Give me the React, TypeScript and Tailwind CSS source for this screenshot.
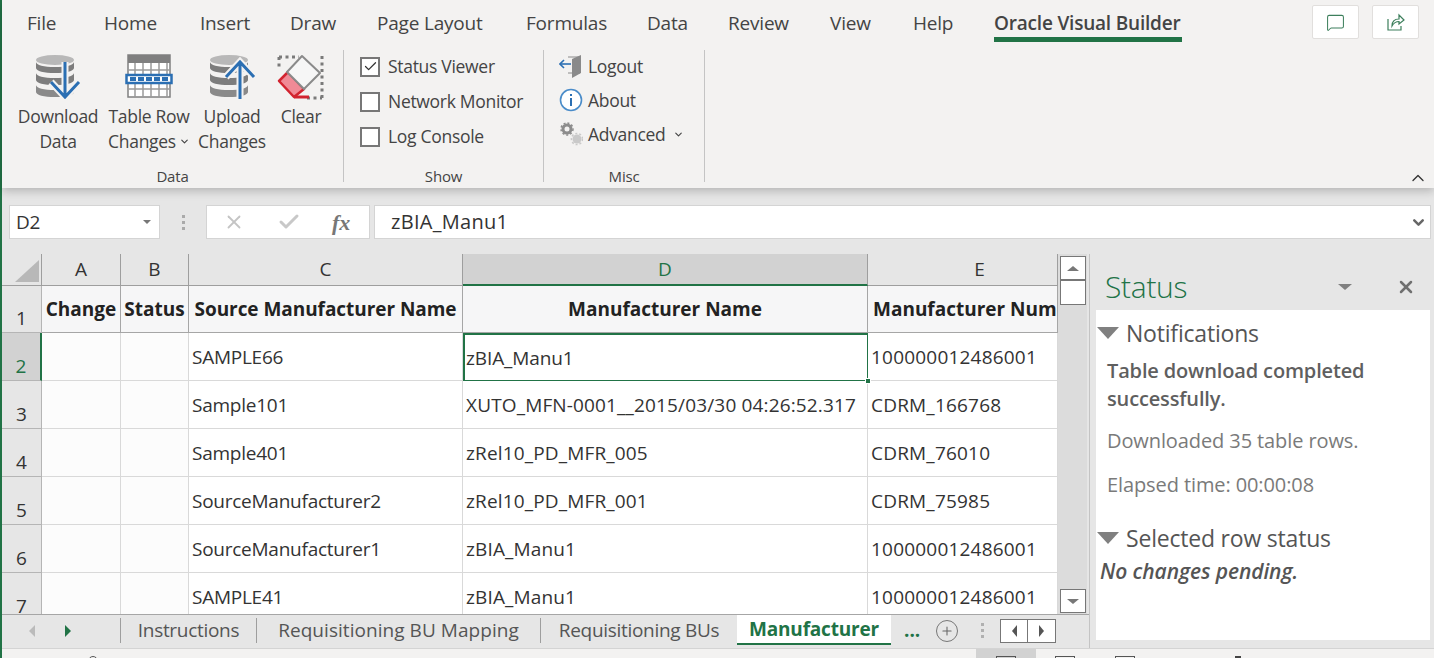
import { Check, ChevronDown, ChevronUp, MessageSquare, Plus, X } from "lucide-react";

const font = "font-['Open_Sans','Noto_Sans',sans-serif]";

const tabs = [
  { label: "File", cls: "w-[77px]" },
  { label: "Home", cls: "w-[96px]" },
  { label: "Insert", cls: "w-[90px]" },
  { label: "Draw", cls: "w-[87px]" },
  { label: "Page Layout", cls: "w-[149px]" },
  { label: "Formulas", cls: "w-[121px]" },
  { label: "Data", cls: "w-[81px]" },
  { label: "Review", cls: "w-[102px]" },
  { label: "View", cls: "w-[83px]" },
  { label: "Help", cls: "w-[81px]" },
];

const rows = [
  { n: "2", c: "SAMPLE66", d: "zBIA_Manu1", e: "100000012486001" },
  { n: "3", c: "Sample101", d: "XUTO_MFN-0001__2015/03/30 04:26:52.317", e: "CDRM_166768" },
  { n: "4", c: "Sample401", d: "zRel10_PD_MFR_005", e: "CDRM_76010" },
  { n: "5", c: "SourceManufacturer2", d: "zRel10_PD_MFR_001", e: "CDRM_75985" },
  { n: "6", c: "SourceManufacturer1", d: "zBIA_Manu1", e: "100000012486001" },
  { n: "7", c: "SAMPLE41", d: "zBIA_Manu1", e: "100000012486001" },
];

function DbIcon({ up }: { up?: boolean }) {
  const arrow = up ? "M32 46V9M18 24 32 9l14 15" : "M31 9v35M17 29l14 15 14-15";
  return (
    <svg width="48" height="48" viewBox="0 0 48 48">
      <ellipse cx="21" cy="7" rx="19" ry="5" fill="#b8b8b8" />
      <path d="M2 9v6c0 3 8 5 19 5s19-2 19-5V9c0 3-8 5-19 5S2 12 2 9z" fill="#7d7d7d" />
      <path d="M2 20v7c0 3 8 5 19 5s19-2 19-5v-7c0 3-8 5-19 5S2 23 2 20z" fill="#7d7d7d" />
      <path d="M2 32v7c0 3 8 5 19 5s19-2 19-5v-7c0 3-8 5-19 5S2 35 2 32z" fill="#8a8a8a" />
      <path d={arrow} fill="none" stroke="#f3f2f1" strokeWidth="7" />
      <path d={arrow} fill="none" stroke="#2b6fb3" strokeWidth="3" />
    </svg>
  );
}

function TableIcon() {
  const lines = [7, 15, 23, 31, 39];
  return (
    <svg width="48" height="48" viewBox="0 0 48 48">
      <rect x="3" y="2" width="42" height="42" fill="#fff" stroke="#808080" strokeWidth="1.5" />
      <rect x="3" y="2" width="42" height="8" fill="#7f7f7f" />
      {lines.map((x) => (
        <path key={x} d={`M${x + 3} 10V44`} stroke="#9a9a9a" strokeWidth="1.5" />
      ))}
      <path d="M3 17h42M3 36h42" stroke="#9a9a9a" strokeWidth="1.5" />
      <rect x="1.500" y="22" width="45" height="8" fill="#fff" stroke="#2b6fb3" strokeWidth="2.5" />
      {lines.map((x) => (
        <rect key={x} x={x - 2} y="24" width="6" height="4" fill="#2b6fb3" />
      ))}
    </svg>
  );
}

function EraserIcon() {
  return (
    <svg width="48" height="48" viewBox="0 0 48 48">
      <path d="M2 4h20M45 3v42M30 45h15M2 4v10" fill="none" stroke="#7a7a7a" strokeWidth="3" strokeDasharray="3 3.5" />
      <path d="M11 19 2 28l15 16 10-8z" fill="#f08a96" stroke="#d2232f" strokeWidth="2.5" strokeLinejoin="round" />
      <path d="M17 44h15" stroke="#d2232f" strokeWidth="3" />
      <path d="M25 3 43 20 27 36 10 19z" fill="#f6f6f6" stroke="#8a8a8a" strokeWidth="2" strokeLinejoin="round" />
    </svg>
  );
}

function LogoutIcon() {
  return (
    <svg width="24" height="24" viewBox="0 0 24 24">
      <path d="M9 3h12v16H9" fill="none" stroke="#8a8a8a" strokeWidth="1" />
      <path d="M13 5 22 1v18l-9 5z" fill="#8a8a8a" />
      <path d="M1 10h11" stroke="#2b6fb3" strokeWidth="1.6" />
      <path d="M5 6 1 10l4 4" fill="none" stroke="#2b6fb3" strokeWidth="1.6" />
    </svg>
  );
}

function InfoIcon() {
  return (
    <svg width="24" height="24" viewBox="0 0 24 24">
      <circle cx="12" cy="12" r="10.5" fill="#fff" stroke="#4a8cc9" strokeWidth="1.6" />
      <rect x="11" y="10" width="2" height="8" fill="#2b6fb3" />
      <rect x="11" y="6" width="2" height="2" fill="#2b6fb3" />
    </svg>
  );
}

function GearsIcon() {
  return (
    <svg width="24" height="24" viewBox="0 0 24 24">
      <circle cx="8" cy="7" r="4" fill="none" stroke="#8c8c8c" strokeWidth="3" />
      <circle cx="8" cy="7" r="6" fill="none" stroke="#8c8c8c" strokeWidth="1.5" strokeDasharray="2 2" />
      <circle cx="18" cy="17" r="4.500" fill="#c9c9c9" />
      <circle cx="18" cy="17" r="5.600" fill="none" stroke="#c9c9c9" strokeWidth="1.5" strokeDasharray="2 2" />
    </svg>
  );
}

function ShareIcon() {
  return (
    <svg width="20" height="20" viewBox="0 0 20 20" fill="none" stroke="#3d7f5c" strokeWidth="1.2">
      <path d="M2 7v11h13v-4" />
      <path d="M6 14c0-5 3-7 7-7V3l5 5-5 4V9.500c-3 0-5 1-7 4.500z" />
    </svg>
  );
}

function BigButton({ icon, lines, cls, caret }: { icon: React.ReactNode; lines: string[]; cls: string; caret?: boolean }) {
  return (
    <div className={`flex flex-col items-center ${cls}`}>
      <div className="h-[50px]">{icon}</div>
      <div className="mt-[1px] text-center text-[17.5px] leading-[25px] text-[#444] whitespace-nowrap tracking-[-0.3px]">
        {lines.map((l, i) => (
          <div key={l} className="flex items-center justify-center gap-[3px]">
            {l}
            {caret && i === lines.length - 1 && <ChevronDown size={11} strokeWidth={2.5} />}
          </div>
        ))}
      </div>
    </div>
  );
}

function CheckRow({ label, checked }: { label: string; checked?: boolean }) {
  return (
    <div className="flex h-[35px] items-center">
      <div className="flex h-[20px] w-[20px] items-center justify-center border-2 border-[#777] bg-white">
        {checked && <Check size={15} strokeWidth={2} color="#333" />}
      </div>
      <span className="ml-[8px] text-[17.5px] tracking-[-0.3px] text-[#444] whitespace-nowrap">{label}</span>
    </div>
  );
}

function MiscRow({ icon, label, caret }: { icon: React.ReactNode; label: string; caret?: boolean }) {
  return (
    <div className="flex h-[34px] items-center">
      <div className="h-[24px] w-[24px]">{icon}</div>
      <span className="ml-[5px] text-[17.5px] tracking-[-0.3px] text-[#444]">{label}</span>
      {caret && <ChevronDown size={11} strokeWidth={2.5} className="ml-[7px] text-[#444]" />}
    </div>
  );
}

function GroupLabel({ text }: { text: string }) {
  return <div className="text-center text-[15px] leading-[13px] tracking-[-0.2px] text-[#444]">{text}</div>;
}

function Ribbon() {
  return (
    <div className="relative z-10 h-[188px] bg-[#f3f2f1] shadow-[0_3px_9px_rgba(0,0,0,0.22)]">
      <div className="flex h-[50px]">
        <div className="flex pl-[25px] pt-[9px] text-[19px] leading-[28px] tracking-[-0.2px] text-[#444]">
          {tabs.map((t) => (
            <div key={t.label} className={t.cls}>
              {t.label}
            </div>
          ))}
          <div className="h-[33px] w-[188px] border-b-[5px] border-[#217346] font-semibold whitespace-nowrap text-[#444]">
            Oracle Visual Builder
          </div>
        </div>
        <div className="ml-[130px] mt-[5px] flex h-[34px] gap-[13px]">
          <div className="flex h-[34px] w-[47px] items-center justify-center rounded-[2px] border border-[#e1dfdd] bg-white">
            <MessageSquare size={19} strokeWidth={1.3} color="#3d7f5c" />
          </div>
          <div className="flex h-[34px] w-[47px] items-center justify-center rounded-[2px] border border-[#e1dfdd] bg-white">
            <ShareIcon />
          </div>
        </div>
      </div>
      <div className="flex h-[132px]">
        <div className="flex w-[342px] flex-col border-r border-[#c4c4c4] pl-[12px]">
          <div className="flex h-[120px] shrink-0 pt-[3px]">
            <BigButton icon={<DbIcon />} lines={["Download", "Data"]} cls="w-[88px]" />
            <BigButton icon={<TableIcon />} lines={["Table Row", "Changes"]} cls="w-[94px]" caret />
            <BigButton icon={<DbIcon up />} lines={["Upload", "Changes"]} cls="w-[72px]" />
            <BigButton icon={<EraserIcon />} lines={["Clear"]} cls="w-[66px]" />
          </div>
          <div className="-ml-[12px]">
            <GroupLabel text="Data" />
          </div>
        </div>
        <div className="flex w-[200px] flex-col border-r border-[#c4c4c4]">
          <div className="-mt-[1px] h-[121px] shrink-0 pl-[16px]">
            <CheckRow label="Status Viewer" checked />
            <CheckRow label="Network Monitor" />
            <CheckRow label="Log Console" />
          </div>
          <GroupLabel text="Show" />
        </div>
        <div className="flex w-[161px] flex-col border-r border-[#c4c4c4]">
          <div className="-mt-[1px] h-[121px] shrink-0 pl-[15px]">
            <MiscRow icon={<LogoutIcon />} label="Logout" />
            <MiscRow icon={<InfoIcon />} label="About" />
            <MiscRow icon={<GearsIcon />} label="Advanced" caret />
          </div>
          <GroupLabel text="Misc" />
        </div>
      </div>
      <ChevronUp size={20} strokeWidth={1.6} className="absolute right-[6px] bottom-0 text-[#333]" />
    </div>
  );
}

function FormulaBar() {
  return (
    <div className="flex h-[66px] items-start bg-[#e6e6e6] pl-[7px] pr-[3px] pt-[17px]">
      <div className="flex h-[34px] w-[151px] items-center justify-between border border-[#d4d4d4] bg-white pl-[6px] pr-[8px]">
        <span className="text-[19px] tracking-[-0.2px] text-[#333]">D2</span>
        <span className="h-0 w-0 border-x-[4px] border-t-[4px] border-x-transparent border-t-[#777]" />
      </div>
      <div className="flex h-[34px] w-[46px] flex-col items-center justify-center gap-[3px]">
        <span className="h-[3px] w-[3px] bg-[#aaa]" />
        <span className="h-[3px] w-[3px] bg-[#aaa]" />
        <span className="h-[3px] w-[3px] bg-[#aaa]" />
      </div>
      <div className="flex h-[34px] w-[164px] items-center border border-[#d4d4d4] bg-white pl-[16px]">
        <X size={22} strokeWidth={2} color="#c4c4c4" />
        <Check size={24} strokeWidth={3} color="#c8c8c8" className="ml-[32px]" />
        <span className="ml-[31px] font-['Liberation_Serif',serif] text-[22px] italic font-bold text-[#777]">fx</span>
      </div>
      <div className="ml-[4px] flex h-[34px] flex-1 items-center justify-between border border-[#d4d4d4] bg-white pl-[16px] pr-[3px]">
        <span className="text-[20px] tracking-[0.3px] text-[#333]">zBIA_Manu1</span>
        <ChevronDown size={17} strokeWidth={3.5} color="#666" />
      </div>
    </div>
  );
}

function Sheet() {
  const head = "flex items-center justify-center h-[32px] border-r border-b text-[19px]";
  const title = "flex h-[47px] items-center justify-center border-r border-b border-[#a6a6a6] bg-[#f6f6f7] pt-[1px] text-[19px] font-bold text-[#222] whitespace-nowrap overflow-hidden";
  const cell = "flex h-[48px] items-center border-r border-b pt-[2px] text-[19px] text-[#333] whitespace-nowrap overflow-hidden";
  const rowHead = "flex items-end justify-center border-r border-b text-[19px]";
  const plainHead = "border-[#9e9e9e] bg-[#e6e6e6] text-[#333]";
  return (
    <div className="h-[360px] overflow-hidden bg-white">
      <div className="grid w-[1056px] grid-cols-[40px_79px_68px_274px_405px_190px]">
        <div className={`${head} ${plainHead} relative`}>
          <svg width="24" height="22" viewBox="0 0 24 22" className="absolute right-[2px] bottom-[3px]">
            <path d="M24 0v22H0z" fill="#b8b8b8" />
          </svg>
        </div>
        <div className={`${head} ${plainHead}`}>A</div>
        <div className={`${head} ${plainHead}`}>B</div>
        <div className={`${head} ${plainHead}`}>C</div>
        <div className={`${head} border-r-[#9e9e9e] border-b-2 border-b-[#217346] bg-[#d2d2d2] text-[#217346]`}>D</div>
        <div className={`${head} ${plainHead} pl-[34px]`}>E</div>

        <div className={`${rowHead} h-[47px] border-[#b5b5b5] bg-[#e6e6e6] text-[#333]`}>1</div>
        <div className={title}>Change</div>
        <div className={title}>Status</div>
        <div className={`${title} tracking-[-0.05px]`}>Source Manufacturer Name</div>
        <div className={title}>Manufacturer Name</div>
        <div className={`${title} justify-start pl-[5px]`}>Manufacturer Number</div>

        {rows.map((r, i) => (
          <div key={r.n} className="contents">
            <div
              className={
                i === 0
                  ? `${rowHead} h-[48px] border-r-2 border-r-[#217346] border-b-[#b5b5b5] bg-[#d2d2d2] text-[#217346]`
                  : `${rowHead} h-[48px] border-[#b5b5b5] bg-[#e6e6e6] text-[#333]`
              }
            >
              {r.n}
            </div>
            <div className={`${cell} border-[#d9d9d9] bg-[#fcfcfc]`} />
            <div className={`${cell} border-[#d9d9d9] bg-[#fcfcfc]`} />
            <div className={`${cell} border-[#d9d9d9] pl-[3px] tracking-[-0.25px]`}>{r.c}</div>
            {i === 0 ? (
              <div className={`${cell} relative overflow-visible border-2 border-[#217346] pl-[1px] pt-0 tracking-[-0.1px]`}>
                {r.d}
                <span className="absolute -right-[4px] -bottom-[4px] h-[6px] w-[6px] border border-white bg-[#217346]" />
              </div>
            ) : (
              <div className={`${cell} border-[#d9d9d9] pl-[3px] tracking-[0.15px]`}>{r.d}</div>
            )}
            <div className={`${cell} border-[#d9d9d9] pl-[3px] tracking-[0.2px]`}>{r.e}</div>
          </div>
        ))}
      </div>
    </div>
  );
}

function Scrollbar() {
  return (
    <div className="flex h-[360px] w-[29px] flex-col items-center bg-[#dcdcdc] pt-[2px]">
      <div className="flex h-[24px] w-[26px] items-center justify-center border border-[#777] bg-white">
        <span className="h-0 w-0 border-x-[6px] border-b-[5px] border-x-transparent border-b-[#777]" />
      </div>
      <div className="h-[25px] w-[26px] border border-[#777] bg-white" />
      <div className="flex-1" />
      <div className="mb-[1px] flex h-[24px] w-[26px] items-center justify-center border border-[#777] bg-white">
        <span className="h-0 w-0 border-x-[6px] border-t-[5px] border-x-transparent border-t-[#777]" />
      </div>
    </div>
  );
}

function SheetTabs() {
  return (
    <div className="flex h-[34px] items-stretch border-t border-[#a6a6a6] bg-[#e6e6e6] pb-[2px] text-[19px] text-[#555]">
      <div className="flex w-[118px] items-center pl-[27px]">
        <span className="h-0 w-0 border-y-[6px] border-r-[6px] border-y-transparent border-r-[#bbb]" />
        <span className="ml-[30px] h-0 w-0 border-y-[6px] border-l-[6px] border-y-transparent border-l-[#217346]" />
      </div>
      <div className="my-[3px] flex w-[136px] items-center justify-center border-l border-[#9e9e9e] tracking-[-0.3px]">Instructions</div>
      <div className="my-[3px] flex w-[284px] items-center justify-center border-l border-[#9e9e9e] tracking-[0.05px] whitespace-nowrap">Requisitioning BU Mapping</div>
      <div className="my-[3px] flex w-[197px] items-center justify-center border-l border-[#9e9e9e] tracking-[-0.3px] whitespace-nowrap">Requisitioning BUs</div>
      <div className="mb-[1px] flex w-[154px] items-center justify-center border-b-[2px] border-[#217346] bg-white font-bold tracking-[-0.2px] text-[#217346]">Manufacturer</div>
      <div className="ml-[13px] flex items-center font-bold text-[#217346]">...</div>
      <div className="ml-[16px] flex items-center">
        <div className="flex h-[22px] w-[22px] items-center justify-center rounded-full border border-[#777]">
          <Plus size={14} strokeWidth={1.8} color="#666" />
        </div>
      </div>
      <div className="ml-[23px] flex flex-col items-center justify-center gap-[3px]">
        <span className="h-[3px] w-[3px] bg-[#b0b0b0]" />
        <span className="h-[3px] w-[3px] bg-[#b0b0b0]" />
        <span className="h-[3px] w-[3px] bg-[#b0b0b0]" />
      </div>
      <div className="ml-[16px] flex items-center">
        <div className="flex h-[24px] w-[28px] items-center justify-center border border-[#777] bg-white">
          <span className="h-0 w-0 border-y-[6px] border-r-[5px] border-y-transparent border-r-[#555]" />
        </div>
        <div className="flex h-[24px] w-[28px] items-center justify-center border border-l-0 border-[#777] bg-white">
          <span className="h-0 w-0 border-y-[6px] border-l-[5px] border-y-transparent border-l-[#555]" />
        </div>
      </div>
    </div>
  );
}

function Triangle() {
  return <span className="h-0 w-0 border-x-[11px] border-t-[12px] border-x-transparent border-t-[#808080]" />;
}

function StatusPane() {
  return (
    <div className="flex h-[394px] w-[345px] flex-col border-l border-[#c4c4c4] bg-[#e6e6e6] pl-[6px] pr-[4px]">
      <div className="flex h-[56px] shrink-0 items-center justify-between pt-[9px] pr-[14px]">
        <span className="ml-[9px] text-[30px] font-light tracking-[-0.3px] text-[#217346]">Status</span>
        <div className="flex items-center gap-[44px]">
          <span className="h-0 w-0 border-x-[7px] border-t-[6px] border-x-transparent border-t-[#808080]" />
          <X size={20} strokeWidth={3} color="#707070" />
        </div>
      </div>
      <div className="h-[330px] bg-white pl-[1px] pt-[7px]">
        <div className="flex h-[32px] items-center">
          <Triangle />
          <span className="ml-[7px] text-[23px] tracking-[-0.2px] text-[#555]">Notifications</span>
        </div>
        <div className="ml-[10px] mt-[8px] text-[20px] font-semibold leading-[28px] tracking-[-0.15px] text-[#5f5f5f]">
          Table download completed
          <br />
          successfully.
        </div>
        <div className="ml-[10px] mt-[14px] text-[20px] leading-[28px] tracking-[-0.1px] text-[#7a7a7a]">Downloaded 35 table rows.</div>
        <div className="ml-[10px] mt-[16px] text-[20px] leading-[28px] tracking-[-0.1px] text-[#7a7a7a]">Elapsed time: 00:00:08</div>
        <div className="mt-[23px] flex h-[32px] items-center">
          <Triangle />
          <span className="ml-[7px] text-[23px] tracking-[-0.2px] text-[#555]">Selected row status</span>
        </div>
        <div className="ml-[3px] mt-[2px] text-[21px] font-semibold italic tracking-[-0.1px] text-[#555]">No changes pending.</div>
      </div>
    </div>
  );
}

function StatusBar() {
  return (
    <div className="flex h-[10px] shrink-0 overflow-hidden border-t border-[#d4d4d4] bg-[#f3f2f1]">
      <span className="ml-[86px] mt-[7px] h-[10px] w-[10px] rounded-full border border-[#555]" />
      <div className="ml-[878px] flex h-full w-[60px] justify-center bg-[#d2d2d2]">
        <span className="mt-[7px] h-[20px] w-[20px] border border-[#555]" />
      </div>
      <span className="ml-[19px] mt-[7px] h-[20px] w-[20px] border border-[#555]" />
      <span className="ml-[40px] mt-[7px] h-[20px] w-[20px] border border-[#555]" />
      <span className="ml-[100px] mt-[7px] h-[10px] w-[6px] bg-[#444]" />
    </div>
  );
}

export default function App() {
  return (
    <div className={`flex h-[658px] w-[1434px] overflow-hidden bg-[#e6e6e6] ${font}`}>
      <div className="w-[2px] bg-[#217346]" />
      <div className="flex w-[1432px] flex-col">
        <Ribbon />
        <FormulaBar />
        <div className="flex">
          <div className="w-[1087px]">
            <div className="flex">
              <Sheet />
              <Scrollbar />
            </div>
            <SheetTabs />
          </div>
          <StatusPane />
        </div>
        <StatusBar />
      </div>
    </div>
  );
}
